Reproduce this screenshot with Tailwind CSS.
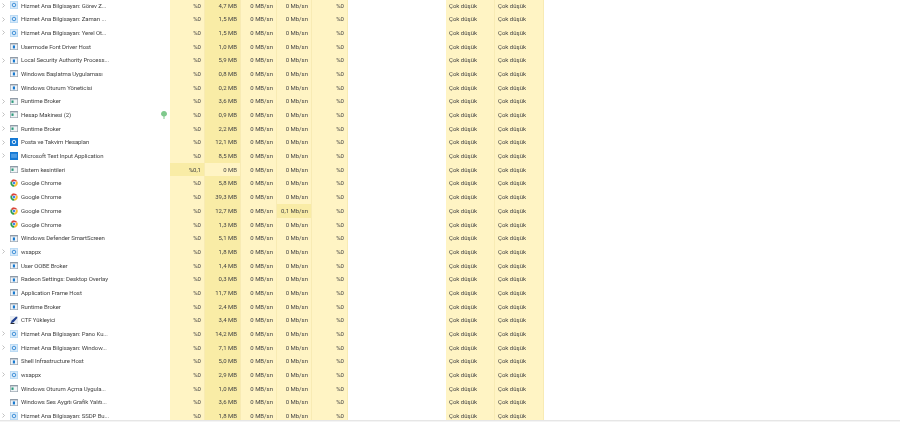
<!DOCTYPE html>
<html lang="tr">
<head>
<meta charset="utf-8">
<script src="https://cdn.jsdelivr.net/npm/@tailwindcss/browser@4"></script>
</head>
<body class="bg-white">
<div class="w-[900px] h-[422px] overflow-hidden flex flex-col bg-white font-['Roboto',sans-serif] text-[6px] text-[#444444]">
  <div class="flex-1 min-h-0 overflow-hidden blur-[0.35px]">
    <div id="rows" class="-mt-[1.5px]"></div>
  </div>
  <div class="h-[2px] bg-[#e6e6e6] border-b border-[#f4f4f4]"></div>
</div>
<script>
const ic = {
 s:'<svg width="8" height="8" viewBox="0 0 9 9"><rect width="9" height="9" fill="#b9d9f3"/><rect x="1" y="1" width="7" height="7" fill="#d8eafa"/><circle cx="4.500" cy="4.500" r="2" fill="none" stroke="#3f8fd6" stroke-width="1.100"/></svg>',
 w:'<svg width="8" height="7" viewBox="0 0 9 8"><rect width="9" height="8" fill="#8f9aa6"/><rect x="0.700" y="1.600" width="7.600" height="5.700" fill="#eef3f8"/><rect x="3.200" y="2.800" width="2.400" height="3.400" fill="#1377cf"/></svg>',
 g:'<svg width="8" height="7" viewBox="0 0 9 8"><rect width="9" height="8" fill="#8f9aa6"/><rect x="0.700" y="1.600" width="7.600" height="5.700" fill="#f0f4f6"/><rect x="1.600" y="2.800" width="2.400" height="2.800" fill="#2b9a7c"/></svg>',
 p:'<svg width="8" height="8" viewBox="0 0 9 9"><rect width="9" height="9" fill="#1478d4"/><circle cx="4.500" cy="4.500" r="2" fill="none" stroke="#e4f1fc" stroke-width="1.100"/></svg>',
 m:'<svg width="8" height="8" viewBox="0 0 9 9"><rect width="9" height="9" fill="#1478d4"/><rect x="1.200" y="2" width="6.600" height="4.600" fill="#4a9be4"/></svg>',
 c:'<svg width="8" height="8" viewBox="0 0 9 9"><path d="M4.500 4.500 1 2.400A4.200 4.200 0 0 1 8.300 2.700H4.500Z" fill="#dc4437"/><path d="M4.500 4.500 8.300 2.700A4.200 4.200 0 0 1 4.700 8.700Z" fill="#f6c02c"/><path d="M4.500 4.500 4.700 8.700A4.200 4.200 0 0 1 1 2.400Z" fill="#2f9e4f"/><circle cx="4.500" cy="4.500" r="2.100" fill="#fff"/><circle cx="4.500" cy="4.500" r="1.500" fill="#3f86ea"/></svg>',
 f:'<svg width="8" height="8" viewBox="0 0 9 9"><rect width="9" height="9" fill="#e9edf2"/><path d="M0.500 8.500 2 5 7 0.500 8.500 2 4 7Z" fill="#1f3f8f"/><path d="M0 9h5v-1H1.500Z" fill="#26282c"/></svg>'
};
const H='Hizmet Ana Bilgisayarı: ';
const d=[
['s',1,H+'Görev Z...','4,7'],['s',1,H+'Zaman ...','1,5'],['s',1,H+'Yerel Ot...','1,5'],
['w',0,'Usermode Font Driver Host','1,0'],['w',1,'Local Security Authority Process...','5,9'],
['w',0,'Windows Başlatma Uygulaması','0,8'],['w',0,'Windows Oturum Yöneticisi','0,2'],
['g',1,'Runtime Broker','3,6'],['g',1,'Hesap Makinesi (2)','0,9'],['g',1,'Runtime Broker','2,2'],
['p',1,'Posta ve Takvim Hesapları','12,1'],['m',1,'Microsoft Text Input Application','8,5'],
['g',0,'Sistem kesintileri','0'],['c',0,'Google Chrome','5,8'],['c',0,'Google Chrome','39,3'],
['c',0,'Google Chrome','12,7'],['c',0,'Google Chrome','1,3'],['w',0,'Windows Defender SmartScreen','5,1'],
['s',1,'wsappx','1,8'],['w',0,'User OOBE Broker','1,4'],['w',0,'Radeon Settings: Desktop Overlay','0,3'],
['w',0,'Application Frame Host','11,7'],['w',0,'Runtime Broker','2,4'],['f',0,'CTF Yükleyici','3,4'],
['s',1,H+'Pano Ku...','14,2'],['s',1,H+'Window...','7,1'],['w',0,'Shell Infrastructure Host','5,0'],
['s',1,'wsappx','2,9'],['g',0,'Windows Oturum Açma Uygula...','1,0'],['w',0,'Windows Ses Aygıtı Grafik Yalıtı...','3,6'],
['s',1,H+'SSDP Bu...','1,8']];
const lo='bg-[#fff4c4] border-r border-[#f8ebb4] text-right pr-[3px]';
const hi='bg-[#f9eca6] border-r border-[#f8ebb4] text-right pr-[3px]';
const ck='bg-[#fff4c4] border-r border-[#f8ebb4] pl-[3px]';
document.getElementById('rows').innerHTML=d.map((r,i)=>{
 const sys=i===12, net=i===15;
 return '<div class="grid grid-cols-[170px_35px_36px_36px_35px_36px_98px_49px_49px] h-[13.7px] leading-[13.7px] whitespace-nowrap">'+
 '<div class="flex items-center relative">'+
 '<span class="w-[10px] shrink-0 flex pl-[2px]">'+(r[1]?'<svg width="3" height="5" viewBox="0 0 3 5"><path d="M.5.5l2 2-2 2" fill="none" stroke="#a6a6a6" stroke-width=".7"/></svg>':'')+'</span>'+
 '<span class="w-[11px] shrink-0 flex">'+ic[r[0]]+'</span><span class="tracking-[-0.09px]">'+r[2]+'</span>'+
 (i===8?'<svg class="absolute left-[161px] top-[3px]" width="6" height="8" viewBox="0 0 6 8"><path d="M3 0C5 0 6 1.500 6 3C6 4.500 4.500 5.500 3.500 5.500L3.500 8H2.500V5.500C1.500 5.500 0 4.500 0 3C0 1.500 1 0 3 0Z" fill="#7fc98c"/></svg>':'')+
 '</div>'+
 '<div class="'+(sys?hi:lo)+'">%0'+(sys?',1':'')+'</div>'+
 '<div class="'+(sys?lo:hi)+'">'+r[3]+' MB</div>'+
 '<div class="'+lo+'">0 MB/sn</div>'+
 '<div class="'+(net?hi:lo)+'">'+(net?'0,1':'0')+' Mb/sn</div>'+
 '<div class="'+lo+'">%0</div>'+
 '<div></div>'+
 '<div class="'+ck+'">Çok düşük</div>'+
 '<div class="'+ck+'">Çok düşük</div>'+
 '</div>';
}).join('');
</script>
</body>
</html>
